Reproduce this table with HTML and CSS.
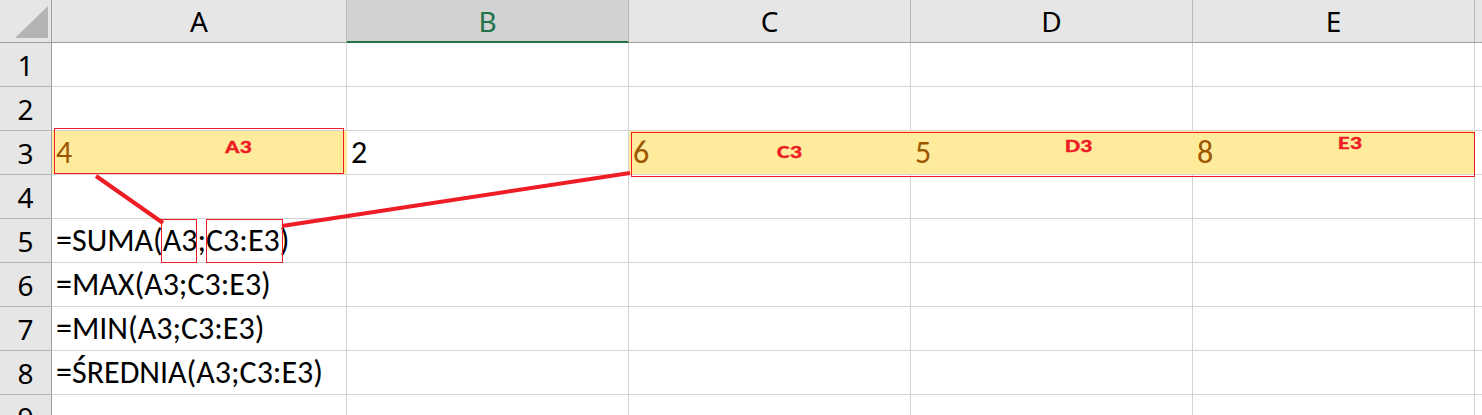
FILE: index.html
```html
<!DOCTYPE html>
<html lang="pl">
<head>
<meta charset="utf-8">
<title>Arkusz</title>
<link rel="stylesheet" href="styles.css">
</head>
<body>
<div class="sheet">
  <div class="grid">
    <div class="corner">
      <svg width="51" height="42" viewBox="0 0 51 42"><polygon points="15,38 48,38 48,6" fill="#b4b4b4"/></svg>
    </div>
    <div class="ch">A</div>
    <div class="ch sel">B</div>
    <div class="ch">C</div>
    <div class="ch">D</div>
    <div class="ch">E</div>
    <div class="ch end"></div>

    <div class="rh">1</div><div class="c"></div><div class="c"></div><div class="c"></div><div class="c"></div><div class="c"></div><div class="c end"></div>
    <div class="rh">2</div><div class="c"></div><div class="c"></div><div class="c"></div><div class="c"></div><div class="c"></div><div class="c end"></div>
    <div class="rh">3</div><div class="c fill val">4</div><div class="c">2</div><div class="c fill val">6</div><div class="c fill val">5</div><div class="c fill val">8</div><div class="c end"></div>
    <div class="rh">4</div><div class="c"></div><div class="c"></div><div class="c"></div><div class="c"></div><div class="c"></div><div class="c end"></div>
    <div class="rh">5</div><div class="c over">=SUMA(A3;C3:E3)</div><div class="c"></div><div class="c"></div><div class="c"></div><div class="c"></div><div class="c end"></div>
    <div class="rh">6</div><div class="c over">=MAX(A3;C3:E3)</div><div class="c"></div><div class="c"></div><div class="c"></div><div class="c"></div><div class="c end"></div>
    <div class="rh">7</div><div class="c over">=MIN(A3;C3:E3)</div><div class="c"></div><div class="c"></div><div class="c"></div><div class="c"></div><div class="c end"></div>
    <div class="rh">8</div><div class="c over">=ŚREDNIA(A3;C3:E3)</div><div class="c"></div><div class="c"></div><div class="c"></div><div class="c"></div><div class="c end"></div>
    <div class="rh">9</div><div class="c"></div><div class="c"></div><div class="c"></div><div class="c"></div><div class="c"></div><div class="c end"></div>
  </div>

  <svg class="overlay" width="1482" height="415" viewBox="0 0 1482 415">
    <rect x="54.5" y="128.5" width="289" height="45" fill="none" stroke="#ee1c25" stroke-width="1"/>
    <rect x="631.5" y="132.5" width="843" height="44" fill="none" stroke="#ee1c25" stroke-width="1"/>
    <rect x="161.5" y="219.5" width="35" height="43" fill="none" stroke="#ee1c25" stroke-width="1"/>
    <rect x="206.5" y="219.5" width="76" height="43" fill="none" stroke="#ee1c25" stroke-width="1"/>
    <line x1="96" y1="176" x2="163" y2="223" stroke="#ee1c25" stroke-width="4"/>
    <line x1="282" y1="226" x2="630" y2="173" stroke="#ee1c25" stroke-width="4"/>
  </svg>
  <div class="tag tag-a3">A3</div>
  <div class="tag tag-c3">C3</div>
  <div class="tag tag-d3">D3</div>
  <div class="tag tag-e3">E3</div>
</div>
</body>
</html>
```

FILE: styles.css
```css
* { box-sizing: border-box; }
html, body { margin: 0; padding: 0; background: #ffffff; }
body { width: 1482px; height: 415px; overflow: hidden; }

.sheet { position: relative; width: 1482px; height: 415px; overflow: hidden; }

.grid {
  display: grid;
  grid-template-columns: 52px 295px 282px 282px 282px 282px 7px;
  grid-template-rows: 43px repeat(9, 44px);
}

.corner {
  background: #e6e6e6;
  border-right: 1px solid #9e9e9e;
  border-bottom: 1px solid #9e9e9e;
  display: flex;
}

.ch {
  background: #e6e6e6;
  border-right: 1px solid #b8b8b8;
  border-bottom: 1px solid #9e9e9e;
  display: flex;
  justify-content: center;
  align-items: flex-end;
  padding-bottom: 2px;
  font-family: "Noto Sans", "Open Sans", sans-serif;
  font-size: 28px;
  line-height: 1.362;
  color: #000;
}
.ch.sel {
  background: #d2d2d2;
  color: #217346;
  border-bottom: 2px solid #217346;
  padding-bottom: 1px;
}
.ch.end { border-right: none; }

.rh {
  background: #e6e6e6;
  border-right: 1px solid #9e9e9e;
  border-bottom: 1px solid #b8b8b8;
  display: flex;
  justify-content: center;
  align-items: flex-end;
  padding-bottom: 2px;
  font-family: "Noto Sans", "Open Sans", sans-serif;
  font-size: 28px;
  line-height: 1.362;
  color: #000;
}

.c {
  border-right: 1px solid #d4d4d4;
  border-bottom: 1px solid #d4d4d4;
  display: flex;
  align-items: flex-end;
  padding-left: 4px;
  padding-bottom: 2px;
  font-family: Carlito, Lato, sans-serif;
  font-size: 32px;
  line-height: 1.2;
  color: #000;
  white-space: nowrap;
}
.c.end { border-right: none; }
.c.over { overflow: visible; position: relative; z-index: 1; }

.c.fill {
  background: #ffeb9c;
  border-right-color: #ffeb9c;
}
.c.val { color: #9c5700; }

.overlay {
  position: absolute;
  left: 0;
  top: 0;
  pointer-events: none;
  z-index: 2;
}

.tag {
  position: absolute;
  z-index: 3;
  font-family: Carlito, Lato, sans-serif;
  font-weight: 700;
  font-size: 19px;
  line-height: 19px;
  color: #ee1c25;
  white-space: nowrap;
  transform: scaleX(1.26);
  transform-origin: left center;
  -webkit-text-stroke: 0.4px #ee1c25;
}
.tag-a3 { left: 225px; top: 137px; }
.tag-c3 { left: 777px; top: 142px; }
.tag-d3 { left: 1065px; top: 136px; }
.tag-e3 { left: 1338px; top: 133px; }
```
